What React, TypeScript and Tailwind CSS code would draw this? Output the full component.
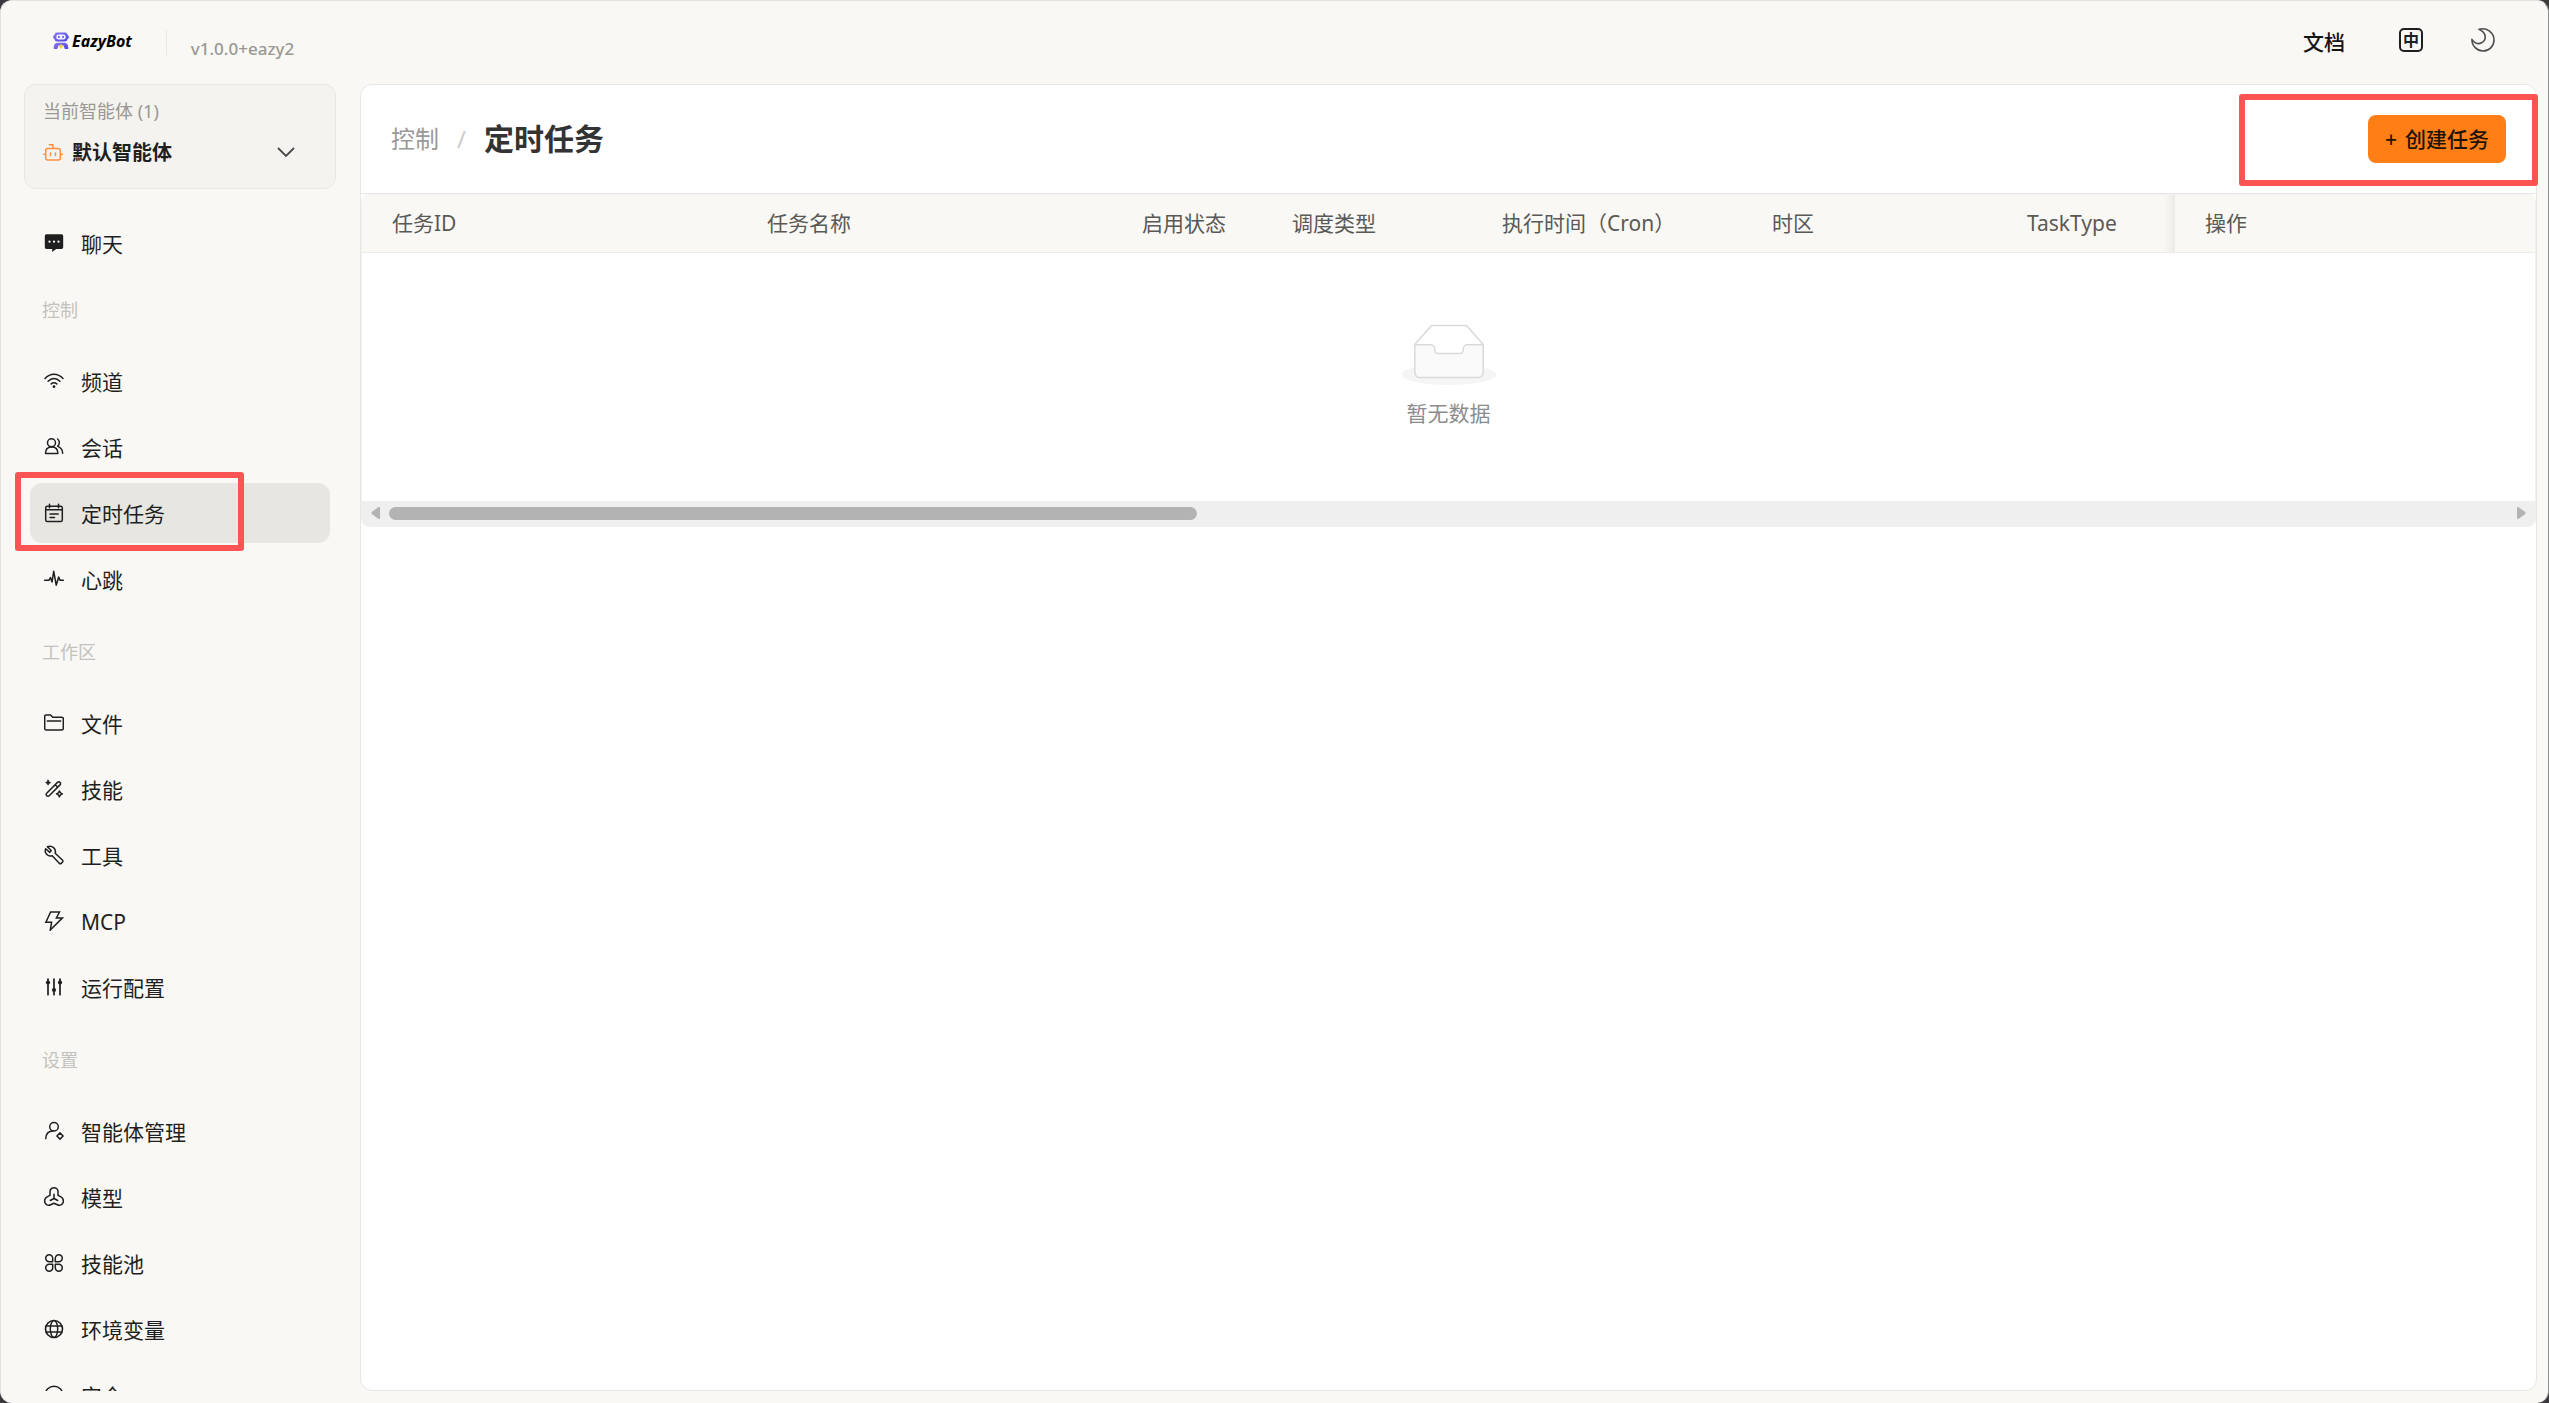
import type { ReactNode } from "react";

interface NavItem {
  label: string;
  icon: ReactNode;
  active?: boolean;
}

interface NavGroup {
  title: string;
  items: NavItem[];
}

function Icon({ children }: { children: ReactNode }) {
  return (
    <svg
      viewBox="0 0 20 20"
      className="h-5 w-5 shrink-0"
      fill="none"
      stroke="currentColor"
      strokeWidth="1.5"
      strokeLinecap="round"
      strokeLinejoin="round"
      aria-hidden="true"
    >
      {children}
    </svg>
  );
}

const ChatIcon = (
  <Icon>
    <path
      d="M2.500 1.300h15a1.700 1.700 0 0 1 1.700 1.700v11.300a1.700 1.700 0 0 1-1.700 1.700h-5.300l-4 3V16H2.500a1.700 1.700 0 0 1-1.700-1.700V3a1.700 1.700 0 0 1 1.700-1.700z"
      fill="currentColor"
      stroke="none"
    />
    <path d="M5.500 8.700h.01M10 8.700h.01M14.500 8.700h.01" stroke="#f9f8f4" strokeWidth="2.200" />
  </Icon>
);

const WifiIcon = (
  <Icon>
    <path d="M1 7.500C6.200 1.800 13.800 1.800 19 7.500M4.100 10.200c3.500-3.700 8.300-3.700 11.800 0M7.200 12.900c1.700-1.700 3.900-1.700 5.600 0" />
    <circle cx="10" cy="15.700" r="1.400" fill="currentColor" stroke="none" />
  </Icon>
);

const UsersIcon = (
  <Icon>
    <circle cx="7.500" cy="5.800" r="4" />
    <path d="M1.500 16.500c0-4 2.300-6.500 6.200-6.500s6.200 2.500 6.200 6.500zM13.600 2c2.300 1.600 2.300 5.500 0 7.300M14.700 9.900c2.400 1.200 3.900 3.500 3.900 6.300" />
  </Icon>
);

const CalendarIcon = (
  <Icon>
    <rect x="1.700" y="3.200" width="16.600" height="15.300" rx="1.600" />
    <path d="M5.500 1.200v3.600M14.500 1.200v3.600M1.700 6.800h16.600M6 10.900h8.200M6 14.500h4.500" />
  </Icon>
);

const PulseIcon = (
  <Icon>
    <path d="M.7 11.300h4.200L6.500 8.500l1.600 4.500L9.700 2.200l2.500 14L14.700 8l1.300 3.300h3.300" />
  </Icon>
);

const FolderIcon = (
  <Icon>
    <path d="M2 2h4.600l2.100 2.200h9.100a1.500 1.500 0 0 1 1.500 1.500v9.800a1.500 1.500 0 0 1-1.500 1.500H2.200a1.500 1.500 0 0 1-1.500-1.500V3.300A1.300 1.300 0 0 1 2 2zM3.300 7.900h13.400" />
  </Icon>
);

const WandIcon = (
  <Icon>
    <path d="M2.700 14.200 13.500 3.400a1.700 1.700 0 0 1 2.500 0 1.700 1.700 0 0 1 0 2.500L5.200 16.700a1.700 1.700 0 0 1-2.500 0 1.700 1.700 0 0 1 0-2.500zM11.200 5.800l2.500 2.500" />
    <path d="m4.100 1.100.8 1.700 1.700.8-1.700.8-.8 1.700-.8-1.700-1.700-.8 1.700-.8z" fill="currentColor" strokeWidth=".8" />
    <path d="m15.400 11.900 1 2 2 1-2 1-1 2-1-2-2-1 2-1z" strokeWidth="1.400" />
  </Icon>
);

const WrenchIcon = (
  <Icon>
    <path d="M3.200 1.500 7 5.200 5.600 7.100 1.500 3.500C-.2 7.400 3.400 11.700 8 10.400l7.300 7.700a1.200 1.200 0 0 0 1.700 0l1.400-1.400a1.200 1.200 0 0 0 0-1.700l-7.400-7.100C12.200 3.600 8.100-.4 3.200 1.500z" transform="translate(.2 .3)" />
  </Icon>
);

const BoltIcon = (
  <Icon>
    <path d="M6.600 1h8.900l-3.100 5.900h6.100L6.300 19l1.300-7.700H1.900z" strokeLinejoin="miter" />
  </Icon>
);

const SlidersIcon = (
  <Icon>
    <path d="M4 2v15.700M10 2v15.700M16 2v15.700" strokeWidth="1.700" />
    <g fill="currentColor" stroke="none">
      <circle cx="4" cy="5.500" r="2.100" />
      <circle cx="10" cy="13" r="2.100" />
      <circle cx="16" cy="5.500" r="2.100" />
    </g>
  </Icon>
);

const AgentIcon = (
  <Icon>
    <circle cx="10" cy="5.800" r="4.300" />
    <path d="M1.800 17.600c.2-4.600 3-7.500 7.200-7.500M16 11.900l3.100 3.100-3.100 3.100-3.100-3.100z" />
  </Icon>
);

const ModelIcon = (
  <Icon>
    <path d="M6 8.300V4.600C6 2.500 7.800.8 10 .8s4 1.700 4 3.800v3.700l2.500 1.300c1.800.9 2.900 2.200 2.900 4.300 0 3.300-3.200 5.200-6 3.900L10 16.200l-3.400 1.600c-2.800 1.300-6-.6-6-3.900 0-2.100 1.100-3.400 2.900-4.300zM10 7.300v4.200M10 11.500l-3.700 2M10 11.500l3.700 2" />
  </Icon>
);

const PoolIcon = (
  <Icon>
    <path d="M8.700 8.700H5.300A3.500 3.500 0 1 1 8.700 5.200zM11.300 8.700h3.400a3.500 3.500 0 1 0-3.400-3.500zM8.700 11.300H5.300a3.500 3.500 0 1 0 3.400 3.500zM11.300 11.300h3.400a3.500 3.500 0 1 1-3.400 3.500z" />
  </Icon>
);

const GlobeIcon = (
  <Icon>
    <circle cx="10" cy="10" r="8.500" strokeWidth="1.600" />
    <ellipse cx="10" cy="10" rx="3.700" ry="8.500" />
    <path d="M2.300 7h15.400M2.300 13h15.400" />
  </Icon>
);

const ShieldIcon = (
  <Icon>
    <circle cx="10" cy="10" r="8.800" />
  </Icon>
);

const groups: NavGroup[] = [
  {
    title: "控制",
    items: [
      { label: "频道", icon: WifiIcon },
      { label: "会话", icon: UsersIcon },
      { label: "定时任务", icon: CalendarIcon, active: true },
      { label: "心跳", icon: PulseIcon },
    ],
  },
  {
    title: "工作区",
    items: [
      { label: "文件", icon: FolderIcon },
      { label: "技能", icon: WandIcon },
      { label: "工具", icon: WrenchIcon },
      { label: "MCP", icon: BoltIcon },
      { label: "运行配置", icon: SlidersIcon },
    ],
  },
  {
    title: "设置",
    items: [
      { label: "智能体管理", icon: AgentIcon },
      { label: "模型", icon: ModelIcon },
      { label: "技能池", icon: PoolIcon },
      { label: "环境变量", icon: GlobeIcon },
      { label: "安全", icon: ShieldIcon },
    ],
  },
];

function NavLink({ label, icon, active }: NavItem) {
  return (
    <a
      href="#"
      aria-current={active ? "page" : undefined}
      className={`relative flex h-[60px] shrink-0 items-center gap-[17px] rounded-xl pl-[14px] text-[21px] leading-8 text-[#1f1f1f] ${
        active ? "bg-[#e7e6e1]" : ""
      }`}
    >
      {icon}
      <span className="pt-[2px]">{label}</span>
      {active && (
        <span className="pointer-events-none absolute -top-[11px] -left-[15px] h-[79px] w-[229px] rounded-[3px] border-6 border-[#fc5353]" />
      )}
    </a>
  );
}

function Logo() {
  return (
    <div className="flex items-center gap-[3px]">
      <svg viewBox="0 0 16 18" className="h-[18px] w-4" aria-hidden="true">
        <defs>
          <linearGradient id="bot" x1="0" y1="0" x2="1" y2="1">
            <stop offset="0" stopColor="#8b7bf5" />
            <stop offset="1" stopColor="#4a46e0" />
          </linearGradient>
        </defs>
        <path
          d="M4 .5h8c1.500 0 2.500 1 2.500 2.500 1 .4 1.300 1 1.300 2s-.3 1.600-1.300 2c0 1.500-1 2.500-2.500 2.500H4C2.500 9.500 1.500 8.500 1.500 7 .5 6.600.2 6 .2 5s.3-1.600 1.300-2C1.500 1.500 2.500.5 4 .5z"
          fill="url(#bot)"
        />
        <rect x="3.300" y="2.500" width="9.400" height="5" rx="2.200" fill="#f3f1ff" />
        <circle cx="5.900" cy="5" r="1" fill="#5a50e6" />
        <circle cx="10.100" cy="5" r="1" fill="#5a50e6" />
        <path d="M5 10.700h6c2.800 0 4.200 2 4.200 4.300v2h-3.400l-1.300-3.500h-5L4.200 17H.8v-2c0-2.300 1.400-4.300 4.200-4.300z" fill="url(#bot)" />
        <path d="m8 12 2 2.400L8 17l-2-2.600z" fill="#ffd43b" />
      </svg>
      <span className="text-base leading-6 font-bold text-black italic">EazyBot</span>
    </div>
  );
}

function Header() {
  return (
    <header className="flex h-[83px] shrink-0 items-center justify-between pr-[53px] pb-1 pl-[52px]">
      <div className="flex items-center">
        <Logo />
        <span className="mt-1 ml-[34px] h-[25px] w-px bg-[#e9e8e4]" />
        <span className="mt-4 ml-6 text-[17px] leading-7 font-medium text-[#999894]">v1.0.0+eazy2</span>
      </div>
      <div className="flex items-center gap-12 pb-[2px]">
        <a href="#" className="pt-1 pr-[6px] text-[21px] leading-8 font-medium text-[#141414]">
          文档
        </a>
        <button
          type="button"
          aria-label="语言"
          className="flex h-6 w-6 items-center justify-center rounded-[5px] border-2 border-[#1f1f1f] text-base leading-none font-bold text-[#1f1f1f]"
        >
          中
        </button>
        <button type="button" aria-label="深色模式" className="text-[#4f4f4d]">
          <svg viewBox="0 0 24 24" className="h-6 w-6" fill="none" stroke="currentColor" strokeWidth="1.600" strokeLinejoin="round">
            <path d="M8 1.300C16-.8 23 4.600 23 12c0 6.200-5 11-11 11S.9 18 .9 11.400C3 15.200 7 16.600 10.500 14.800 16 12 15.500 4.500 8 1.300z" />
          </svg>
        </button>
      </div>
    </header>
  );
}

function Sidebar() {
  return (
    <aside className="w-[359px] shrink-0 overflow-hidden pr-6 pl-[23px]">
      <div className="rounded-xl border border-[#e8e7e3] bg-[#f4f3ef] pt-[13px] pr-[39px] pb-5 pl-[18px]">
        <label htmlFor="agent" className="block text-lg leading-[27px] text-[#999894]">
          当前智能体 (1)
        </label>
        <div className="mt-[13px] flex h-[30px] items-center text-[#ff8f3e]">
          <Icon>
            <rect x="2.700" y="5.500" width="14.600" height="11.500" rx="2" />
            <path d="M10 5.300V1.800H6.300M.8 11.300h1.600M17.600 11.300h1.600M7.500 10v2.400M12.500 10v2.400" />
          </Icon>
          <select
            id="agent"
            className="ml-[9px] min-w-0 flex-1 appearance-none bg-transparent text-[20px] leading-[30px] font-bold text-[#1f1f1f]"
          >
            <option>默认智能体</option>
          </select>
          <svg viewBox="0 0 20 20" className="h-5 w-5 text-[#4a4a48]" fill="none" stroke="currentColor" strokeWidth="1.800" aria-hidden="true">
            <path d="m2 5 8 8 8-8" />
          </svg>
        </div>
      </div>
      <nav className="mt-6 px-[6px]">
        <NavLink label="聊天" icon={ChatIcon} />
        {groups.map((group, i) => (
          <section key={group.title} className={i === 0 ? "mt-[6px]" : "mt-3"}>
            <h2 className="flex h-[60px] items-center pt-[2px] pl-3 text-lg text-[#c3c2bf]">{group.title}</h2>
            <div className="mt-3 flex flex-col gap-[6px]">
              {group.items.map((item) => (
                <NavLink key={item.label} {...item} />
              ))}
            </div>
          </section>
        ))}
      </nav>
    </aside>
  );
}

const columns = [
  { title: "任务ID", className: "w-[375px]" },
  { title: "任务名称", className: "w-[375px]" },
  { title: "启用状态", className: "w-[150px]" },
  { title: "调度类型", className: "w-[210px]" },
  { title: "执行时间（Cron）", className: "w-[270px]" },
  { title: "时区", className: "w-[255px]" },
  { title: "TaskType", className: "shadow-[inset_-15px_0_12px_-12px_rgba(5,5,5,0.08)]" },
  { title: "操作", className: "w-[360px]" },
];

function EmptyState() {
  return (
    <div className="flex flex-col items-center pt-[71px] pb-[71px]">
      <svg viewBox="0 0 64 41" className="h-[61px] w-24" aria-hidden="true">
        <g transform="translate(0 1)" fill="none" fillRule="evenodd">
          <ellipse fill="#f5f5f5" cx="32" cy="33" rx="32" ry="7" />
          <g fillRule="nonzero" stroke="#d9d9d9">
            <path d="M55 12.760L44.854 1.258C44.367.474 43.656 0 42.907 0H21.093c-.749 0-1.460.474-1.947 1.257L9 12.761V22h46v-9.240z" />
            <path
              d="M41.613 15.931c0-1.605.994-2.930 2.227-2.931H55v18.137C55 33.260 53.680 35 52.050 35h-40.100C10.320 35 9 33.259 9 31.137V13h11.160c1.233 0 2.227 1.323 2.227 2.928v.022c0 1.605 1.005 2.901 2.237 2.901h14.752c1.232 0 2.237-1.308 2.237-2.913v-.007z"
              fill="#fafafa"
            />
          </g>
        </g>
      </svg>
      <p className="mt-3 text-[21px] leading-[33px] text-[#8c8c8c]">暂无数据</p>
    </div>
  );
}

function Scrollbar() {
  return (
    <div className="flex h-[25px] items-center gap-[9px] bg-[#efefef] px-[9px]">
      <svg viewBox="0 0 9 12" className="h-3 w-[9px]" fill="#b3b3b3" aria-hidden="true">
        <path d="M9 1v10c0 1-1 1.300-1.800.7L.8 7C.2 6.500.2 5.500.8 5L7.200.3C8-.3 9 0 9 1z" />
      </svg>
      <div className="h-[13px] w-3/8 rounded-full bg-[#b3b3b3]" />
      <svg viewBox="0 0 9 12" className="ml-auto h-3 w-[9px]" fill="#b3b3b3" aria-hidden="true">
        <path d="M0 1v10c0 1 1 1.300 1.800.7L8.200 7c.6-.5.6-1.500 0-2L1.800.3C1-.3 0 0 0 1z" />
      </svg>
    </div>
  );
}

function TaskTable() {
  return (
    <div className="overflow-hidden rounded-lg border border-[#f0f0f0]">
      <table className="w-full table-fixed border-collapse">
        <thead>
          <tr className="border-b border-[#ecebe9] bg-[#f9f8f4]">
            {columns.map((col) => (
              <th
                key={col.title}
                scope="col"
                className={`h-[57px] px-[30px] text-left text-[21px] leading-8 font-normal whitespace-nowrap text-[#595957] ${col.className}`}
              >
                {col.title}
              </th>
            ))}
          </tr>
        </thead>
        <tbody>
          <tr>
            <td colSpan={columns.length}>
              <EmptyState />
            </td>
          </tr>
        </tbody>
      </table>
      <Scrollbar />
    </div>
  );
}

export default function App() {
  return (
    <div className="h-screen bg-[#3b393c] font-['Noto_Sans','Noto_Sans_CJK_SC',sans-serif]">
      <div className="flex h-full flex-col overflow-hidden rounded-xl border-x border-t border-[#e3e2df] border-r-[#8e8e8c] bg-[#f9f8f4]">
        <Header />
        <div className="flex min-h-0 flex-1 pr-[11px] pb-3">
          <Sidebar />
          <main className="min-w-0 flex-1 rounded-xl border border-[#e8e7e4] bg-white">
            <div className="relative flex h-[109px] items-center justify-between border-b border-[#e8e8e8] px-[30px]">
              <nav className="flex items-center gap-[18px] text-2xl" aria-label="breadcrumb">
                <a href="#" className="text-[#999999]">
                  控制
                </a>
                <span className="text-[#cccccc]">/</span>
                <h1 className="text-3xl font-bold text-[#333333]">定时任务</h1>
              </nav>
              <button
                type="button"
                className="flex h-12 items-center gap-2 rounded-lg bg-[#ff7f16] px-[17px] text-[21px] leading-8 font-medium text-[#1f1408]"
              >
                <span>+</span>
                <span>创建任务</span>
              </button>
              <span className="pointer-events-none absolute top-[9px] -right-[2px] h-[92px] w-[299px] rounded-[3px] border-6 border-[#fc5353]" />
            </div>
            <TaskTable />
          </main>
        </div>
      </div>
    </div>
  );
}
